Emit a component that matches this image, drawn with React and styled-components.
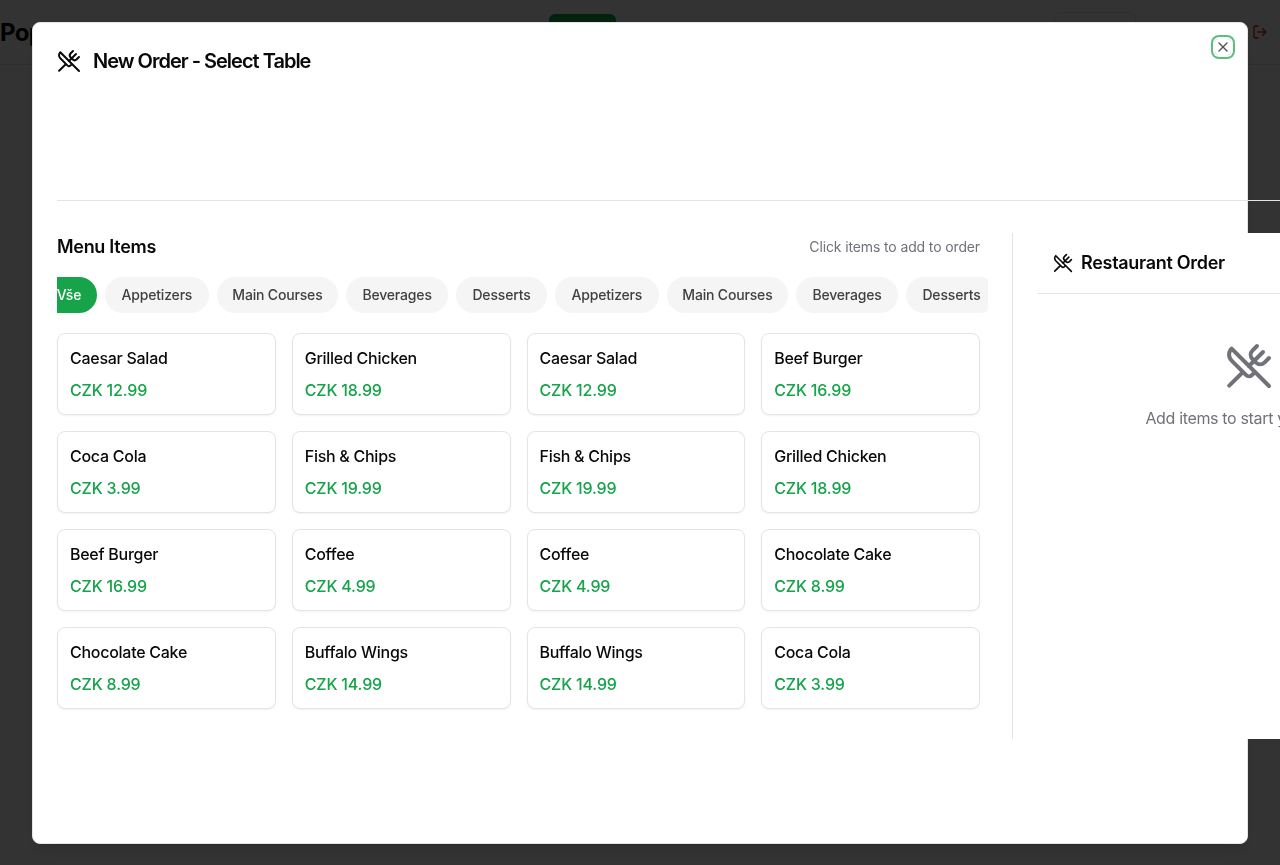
import React from "react";
import styled, { createGlobalStyle } from "styled-components";
import { UtensilsCrossed, X, LogOut } from "lucide-react";

const GlobalStyle = createGlobalStyle`
  *, *::before, *::after { box-sizing: border-box; }
  body {
    margin: 0;
    overflow: hidden;
    background: #fff;
    color: #09090b;
    font-family: Inter, "Liberation Sans", sans-serif;
    font-size: 16px;
    line-height: 24px;
  }
  h1, h2, h3, p { margin: 0; }
  button { font: inherit; cursor: pointer; }
`;

const Page = styled.div`
  height: 100vh;
  overflow: hidden;
`;

const TopBar = styled.header`
  display: flex;
  align-items: flex-start;
  width: 1280px;
  height: 65px;
  padding-top: 12px;
  border-bottom: 1px solid #e4e4e7;
`;

const Brand = styled.h1`
  width: 549px;
  padding-top: 5px;
  font-size: 24px;
  font-weight: 700;
  letter-spacing: -0.6px;
  line-height: 32px;
`;

const PrimaryAction = styled.button`
  width: 67px;
  height: 36px;
  margin: 2px 438px 0 0;
  padding: 0;
  border: 0;
  border-radius: 6px;
  background: #16a34a;
`;

const OutlineAction = styled.button`
  width: 82px;
  height: 40px;
  margin-right: 116px;
  padding: 0;
  border: 1px solid #e4e4e7;
  border-radius: 6px;
  background: transparent;
`;

const LogoutIcon = styled(LogOut)`
  flex: none;
  margin-top: 12px;
  color: #dc2626;
`;

const Overlay = styled.div`
  position: fixed;
  inset: 0;
  display: flex;
  align-items: flex-start;
  justify-content: center;
  padding-top: 22px;
  overflow: hidden;
  background: rgba(0, 0, 0, 0.8);
`;

const Dialog = styled.section`
  position: relative;
  width: 95vw;
  height: 822px;
  padding: 24px;
  border: 1px solid #e4e4e7;
  border-radius: 8px;
  background: #fff;
  box-shadow: 0 10px 15px -3px rgba(0, 0, 0, 0.1), 0 4px 6px -4px rgba(0, 0, 0, 0.1);
`;

const CloseButton = styled.button`
  position: absolute;
  top: 16px;
  right: 16px;
  display: flex;
  width: 16px;
  height: 16px;
  padding: 0;
  border: 0;
  border-radius: 4px;
  outline: none;
  background: transparent;
  color: #09090b;
  opacity: 0.7;
  box-shadow: 0 0 0 2px #fff, 0 0 0 4px #16a34a;
`;

const DialogTitle = styled.h2`
  display: flex;
  align-items: center;
  gap: 12px;
  height: 28px;
  font-size: 20px;
  font-weight: 600;
  letter-spacing: -1px;
`;

const TableSelection = styled.div`
  width: 1404px;
  height: 110px;
  margin: 16px 0 32px;
  border-bottom: 1px solid #e4e4e7;
`;

const Workspace = styled.div`
  display: flex;
  gap: 32px;
  width: 1404px;
  height: 506px;
`;

const Menu = styled.div`
  flex: none;
  width: 923px;
`;

const MenuHeader = styled.div`
  display: flex;
  align-items: center;
  justify-content: space-between;
  height: 28px;
  margin-bottom: 16px;
`;

const Heading = styled.h3`
  font-size: 18px;
  font-weight: 600;
  letter-spacing: -0.3px;
  line-height: 28px;
`;

const Hint = styled.span`
  color: #71717a;
  font-size: 14px;
  letter-spacing: -0.13px;
  line-height: 20px;
`;

const Categories = styled.div`
  display: flex;
  gap: 8px;
  width: 931px;
  margin-bottom: 20px;
  overflow: hidden;

  > :first-child { margin-left: -16px; }
`;

const Category = styled.button`
  flex: none;
  width: ${(p) => p.$width}px;
  height: 36px;
  padding: 0;
  border: 0;
  border-radius: 18px;
  background: ${(p) => (p.$active ? "#16a34a" : "#f5f5f5")};
  color: ${(p) => (p.$active ? "#fff" : "#404040")};
  font-size: 14px;
  font-weight: 500;
  letter-spacing: -0.17px;
  line-height: 20px;
  white-space: nowrap;
`;

const Items = styled.div`
  display: grid;
  grid-template-columns: repeat(4, 1fr);
  gap: 16px;
`;

const ItemCard = styled.article`
  display: flex;
  flex-direction: column;
  gap: 8px;
  height: 82px;
  padding: 12px;
  border: 1px solid #e4e4e7;
  border-radius: 8px;
  background: #fff;
  box-shadow: 0 1px 2px rgba(0, 0, 0, 0.05);
  font-weight: 500;
  letter-spacing: -0.27px;
`;

const Price = styled.p`
  color: #16a34a;
  letter-spacing: -0.17px;
`;

const Order = styled.aside`
  flex: 1;
  padding-left: 24px;
  border-left: 1px solid #e4e4e7;
  background: #fff;
`;

const OrderHeader = styled.div`
  display: flex;
  align-items: center;
  gap: 8px;
  height: 61px;
  padding: 16px;
  border-bottom: 1px solid #e4e4e7;
`;

const EmptyOrder = styled.div`
  display: flex;
  flex-direction: column;
  align-items: center;
  gap: 16px;
  padding-top: 48px;
  color: #71717a;
  letter-spacing: -0.34px;
`;

const menuSections = [
  { name: "Appetizers", width: 103.7 },
  { name: "Main Courses", width: 121.5 },
  { name: "Beverages", width: 101.8 },
  { name: "Desserts", width: 91 },
];
const categories = [{ name: "Vše", width: 56 }, ...menuSections, ...menuSections];

const items = [
  ["Caesar Salad", "12.99"], ["Grilled Chicken", "18.99"], ["Caesar Salad", "12.99"], ["Beef Burger", "16.99"],
  ["Coca Cola", "3.99"], ["Fish & Chips", "19.99"], ["Fish & Chips", "19.99"], ["Grilled Chicken", "18.99"],
  ["Beef Burger", "16.99"], ["Coffee", "4.99"], ["Coffee", "4.99"], ["Chocolate Cake", "8.99"],
  ["Chocolate Cake", "8.99"], ["Buffalo Wings", "14.99"], ["Buffalo Wings", "14.99"], ["Coca Cola", "3.99"],
];

export default function App() {
  return (
    <Page>
      <GlobalStyle />
      <TopBar>
        <Brand>Pop</Brand>
        <PrimaryAction />
        <OutlineAction />
        <LogoutIcon size={16} />
      </TopBar>
      <Overlay>
        <Dialog>
          <DialogTitle>
            <UtensilsCrossed size={24} />
            New Order - Select Table
          </DialogTitle>
          <TableSelection />
          <Workspace>
            <Menu>
              <MenuHeader>
                <Heading>Menu Items</Heading>
                <Hint>Click items to add to order</Hint>
              </MenuHeader>
              <Categories>
                {categories.map(({ name, width }, i) => (
                  <Category key={i} $width={width} $active={i === 0}>{name}</Category>
                ))}
              </Categories>
              <Items>
                {items.map(([name, price], i) => (
                  <ItemCard key={i}>
                    <p>{name}</p>
                    <Price>CZK {price}</Price>
                  </ItemCard>
                ))}
              </Items>
            </Menu>
            <Order>
              <OrderHeader>
                <UtensilsCrossed size={20} />
                <Heading>Restaurant Order</Heading>
              </OrderHeader>
              <EmptyOrder>
                <UtensilsCrossed size={48} />
                <p>Add items to start your order</p>
              </EmptyOrder>
            </Order>
          </Workspace>
          <CloseButton aria-label="Close"><X size={16} /></CloseButton>
        </Dialog>
      </Overlay>
    </Page>
  );
}
